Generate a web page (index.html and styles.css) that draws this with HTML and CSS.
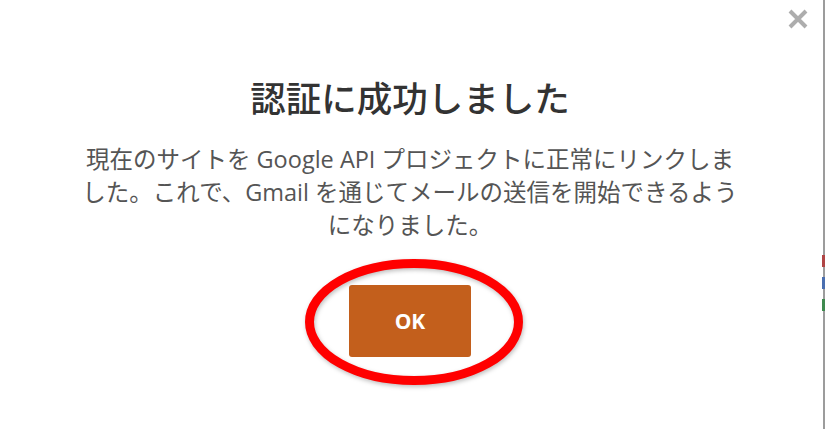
FILE: index.html
```html
<!DOCTYPE html>
<html lang="ja">
<head>
  <meta charset="UTF-8">
  <title>認証に成功しました</title>
  <meta name="viewport" content="width=device-width, initial-scale=1.0">
  <link rel="stylesheet" href="styles.css">
</head>
<body>

  <div class="dialog">

    <!-- close -->
    <button class="close" aria-label="閉じる">
      <svg width="22" height="22" viewBox="0 0 22 22">
        <path d="M3 3 L19 19 M19 3 L3 19" stroke="#adadad" stroke-width="4"/>
      </svg>
    </button>

    <h2 class="title">認証に成功しました</h2>

    <p class="message">現在のサイトを Google API プロジェクトに正常にリンクしま<br>した。これで、Gmail を通じてメールの送信を開始できるよう<br>になりました。</p>

    <div class="actions">
      <span class="highlight">
        <button class="ok">OK</button>
        <svg class="ring" width="228" height="135" viewBox="0 0 228 135">
          <ellipse cx="113" cy="64" rx="104.5" ry="58.5" fill="none" stroke="#ff0000" stroke-width="9"/>
        </svg>
      </span>
    </div>

    <!-- marks on the right edge -->
    <div class="edge-marks">
      <span class="mark red"></span>
      <span class="mark blue"></span>
      <span class="mark green"></span>
    </div>

  </div>

</body>
</html>
```

FILE: styles.css
```css
/* Reset */
* {
  margin: 0;
  padding: 0;
  box-sizing: border-box;
}

body {
  background: #fff;
  font-family: "Open Sans", "Noto Sans CJK JP", sans-serif;
  overflow: hidden;
}

.dialog {
  position: relative;
  height: 429px;
  border-right: 2px solid #9c9c9c;
  display: flex;
  flex-direction: column;
  align-items: center;
  padding-top: 73px;
  padding-right: 3px;
}

.close {
  position: absolute;
  top: 8px;
  right: 14px;
  background: none;
  border: none;
  width: 22px;
  height: 22px;
  cursor: pointer;
}

.title {
  font-family: "Noto Sans CJK JP", sans-serif;
  font-size: 35.5px;
  font-weight: 500;
  color: #333;
  line-height: 48px;
  margin-bottom: 22px;
}

.message {
  text-align: center;
  white-space: nowrap;
  font-size: 23.5px;
  line-height: 33px;
  color: #555;
}

.actions {
  margin-top: 43px;
}

.highlight {
  position: relative;
  display: inline-block;
}

.ok {
  width: 122px;
  height: 72px;
  background: #c35f1c;
  color: #fff;
  border: none;
  border-radius: 3px;
  font-family: "Open Sans", sans-serif;
  font-size: 21px;
  font-weight: 700;
  display: block;
}

.ring {
  position: absolute;
  left: -48px;
  top: -27px;
  filter: drop-shadow(1px 2px 2px rgba(0, 0, 0, 0.25));
  pointer-events: none;
}

.edge-marks {
  position: absolute;
  right: -2px;
  top: 255px;
  display: flex;
  flex-direction: column;
  gap: 10px;
}

.mark {
  display: block;
  width: 3px;
  height: 12px;
}

.red { background: #b04545; }
.blue { background: #4a6fb0; }
.green { background: #3f8a4f; }
```
